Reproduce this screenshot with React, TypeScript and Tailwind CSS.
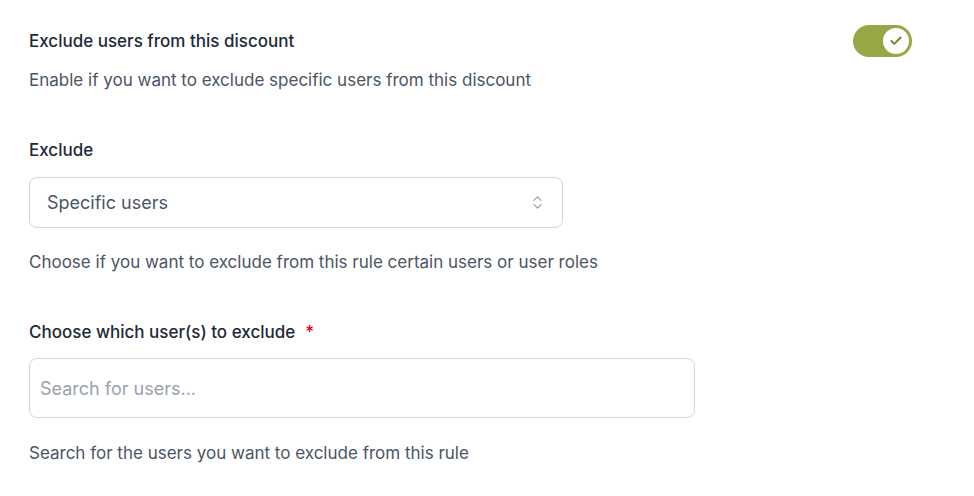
import { ChevronsUpDown, Check } from 'lucide-react';

export default function App() {
  return (
    <div
      className="min-h-screen bg-white pl-[29px] pt-[29px]"
      style={{ fontFamily: 'Inter, "Noto Sans", sans-serif' }}
    >
      <div className="w-[883px]">
        {/* Toggle row */}
        <div className="flex items-start justify-between">
          <h3 className="text-[17px] font-medium leading-6 text-gray-800">
            Exclude users from this discount
          </h3>
          <button className="-mt-[4px] flex h-8 w-[59px] items-center justify-end rounded-full bg-[#98a746] px-[3px]">
            <span className="flex h-[26px] w-[26px] items-center justify-center rounded-full bg-white">
              <Check size={14} strokeWidth={3.25} className="text-[#76823a]" />
            </span>
          </button>
        </div>
        <p className="mt-[11px] text-[17px] leading-6 text-gray-600">
          Enable if you want to exclude specific users from this discount
        </p>

        {/* Exclude select */}
        <label className="mt-[46px] block text-[17px] font-medium leading-6 text-gray-800">
          Exclude
        </label>
        <div className="mt-[15px] flex h-[51px] w-[534px] items-center justify-between rounded-lg border border-gray-300 pl-[17px] pr-[16px]">
          <span className="text-[18px] text-gray-600">Specific users</span>
          <ChevronsUpDown size={17} strokeWidth={1.75} className="text-gray-400" />
        </div>
        <p className="mt-[22px] text-[17px] leading-6 text-gray-600">
          Choose if you want to exclude from this rule certain users or user roles
        </p>

        {/* Users search */}
        <label className="mt-[46px] flex items-center text-[17px] font-medium leading-6 text-gray-800">
          Choose which user(s) to exclude
          <span className="ml-[10px] text-red-600">*</span>
        </label>
        <input
          className="mt-[14px] block h-[60px] w-[666px] rounded-lg border border-gray-300 px-[10px] text-[18px] text-gray-700 placeholder:text-gray-400 outline-none"
          placeholder="Search for users..."
        />
        <p className="mt-[23px] text-[17px] leading-6 text-gray-600">
          Search for the users you want to exclude from this rule
        </p>
      </div>
    </div>
  );
}
